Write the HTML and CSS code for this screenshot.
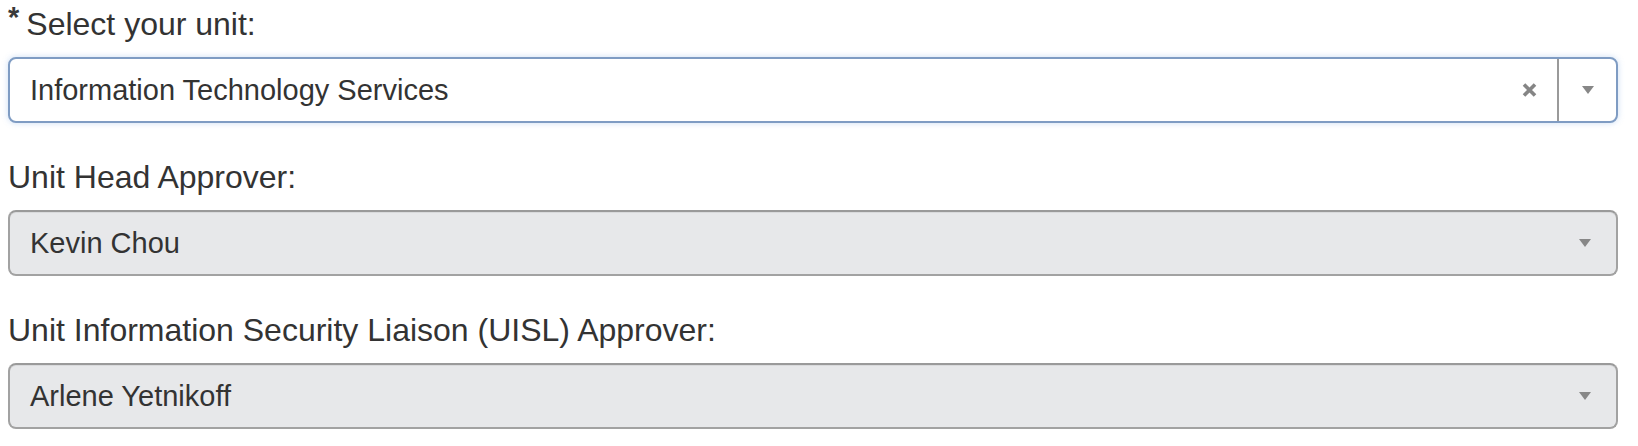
FILE: index.html
```html
<!DOCTYPE html>
<html lang="en">
<head>
<meta charset="utf-8">
<title>Unit selection</title>
<link rel="stylesheet" href="styles.css">
</head>
<body>
<form class="form">
  <div class="group">
    <label class="label"><span class="req">*</span>Select your unit:</label>
    <div class="select select--focus">
      <span class="select-value">Information Technology Services</span>
      <span class="select-clear" aria-label="Clear">
        <svg width="15" height="14" viewBox="0 0 15 14"><path d="M2 1.5 L13 12.5 M13 1.5 L2 12.5" stroke="#858585" stroke-width="3.6" fill="none"/></svg>
      </span>
      <span class="select-toggle select-toggle--split">
        <svg width="12" height="8" viewBox="0 0 12 8"><polygon points="0,0 12,0 6,8" fill="#878787"/></svg>
      </span>
    </div>
  </div>
  <div class="group">
    <label class="label">Unit Head Approver:</label>
    <div class="select select--disabled">
      <span class="select-value">Kevin Chou</span>
      <span class="select-toggle">
        <svg width="12" height="8" viewBox="0 0 12 8"><polygon points="0,0 12,0 6,8" fill="#878787"/></svg>
      </span>
    </div>
  </div>
  <div class="group">
    <label class="label">Unit Information Security Liaison (UISL) Approver:</label>
    <div class="select select--disabled">
      <span class="select-value">Arlene Yetnikoff</span>
      <span class="select-toggle">
        <svg width="12" height="8" viewBox="0 0 12 8"><polygon points="0,0 12,0 6,8" fill="#878787"/></svg>
      </span>
    </div>
  </div>
</form>
</body>
</html>
```

FILE: styles.css
```css
html, body {
  margin: 0;
  padding: 0;
  background: #ffffff;
}

body {
  font-family: "Liberation Sans", Arial, Helvetica, sans-serif;
  color: #333333;
}

.form {
  padding: 0 20px 0 8px;
}

.group {
  margin-bottom: 30px;
}

.label {
  display: block;
  font-size: 32px;
  line-height: 48px;
  height: 48px;
  margin-bottom: 9px;
  color: #333333;
}

.req {
  font-size: 29px;
  font-weight: bold;
  line-height: 0;
  vertical-align: 8px;
  margin-right: 7px;
  color: #3a3a3a;
}

.select {
  box-sizing: border-box;
  height: 66px;
  display: flex;
  align-items: stretch;
  border: 2px solid #a4a4a4;
  border-radius: 8px;
  font-size: 29px;
  color: #333333;
}

.select--focus {
  background: #ffffff;
  border-color: #7f9cc3;
  box-shadow: 0 0 6px rgba(110, 160, 225, 0.35);
}

.select--disabled {
  background: #e7e8ea;
  border-color: #a2a2a2;
  border-top-color: #9a9a9a;
  box-shadow: inset 0 1px 0 rgba(0, 0, 0, 0.06);
}

.select-value {
  flex: 1;
  padding-left: 20px;
  line-height: 62px;
  white-space: nowrap;
  overflow: hidden;
}

.select-clear {
  display: flex;
  align-items: center;
  margin-right: 20px;
}

.select-clear svg,
.select-toggle svg {
  display: block;
}

.select-toggle {
  display: flex;
  align-items: center;
  justify-content: center;
  padding-right: 25px;
}

.select-toggle--split {
  width: 57px;
  padding-right: 0;
  border-left: 2px solid #9a9a9a;
}
```
